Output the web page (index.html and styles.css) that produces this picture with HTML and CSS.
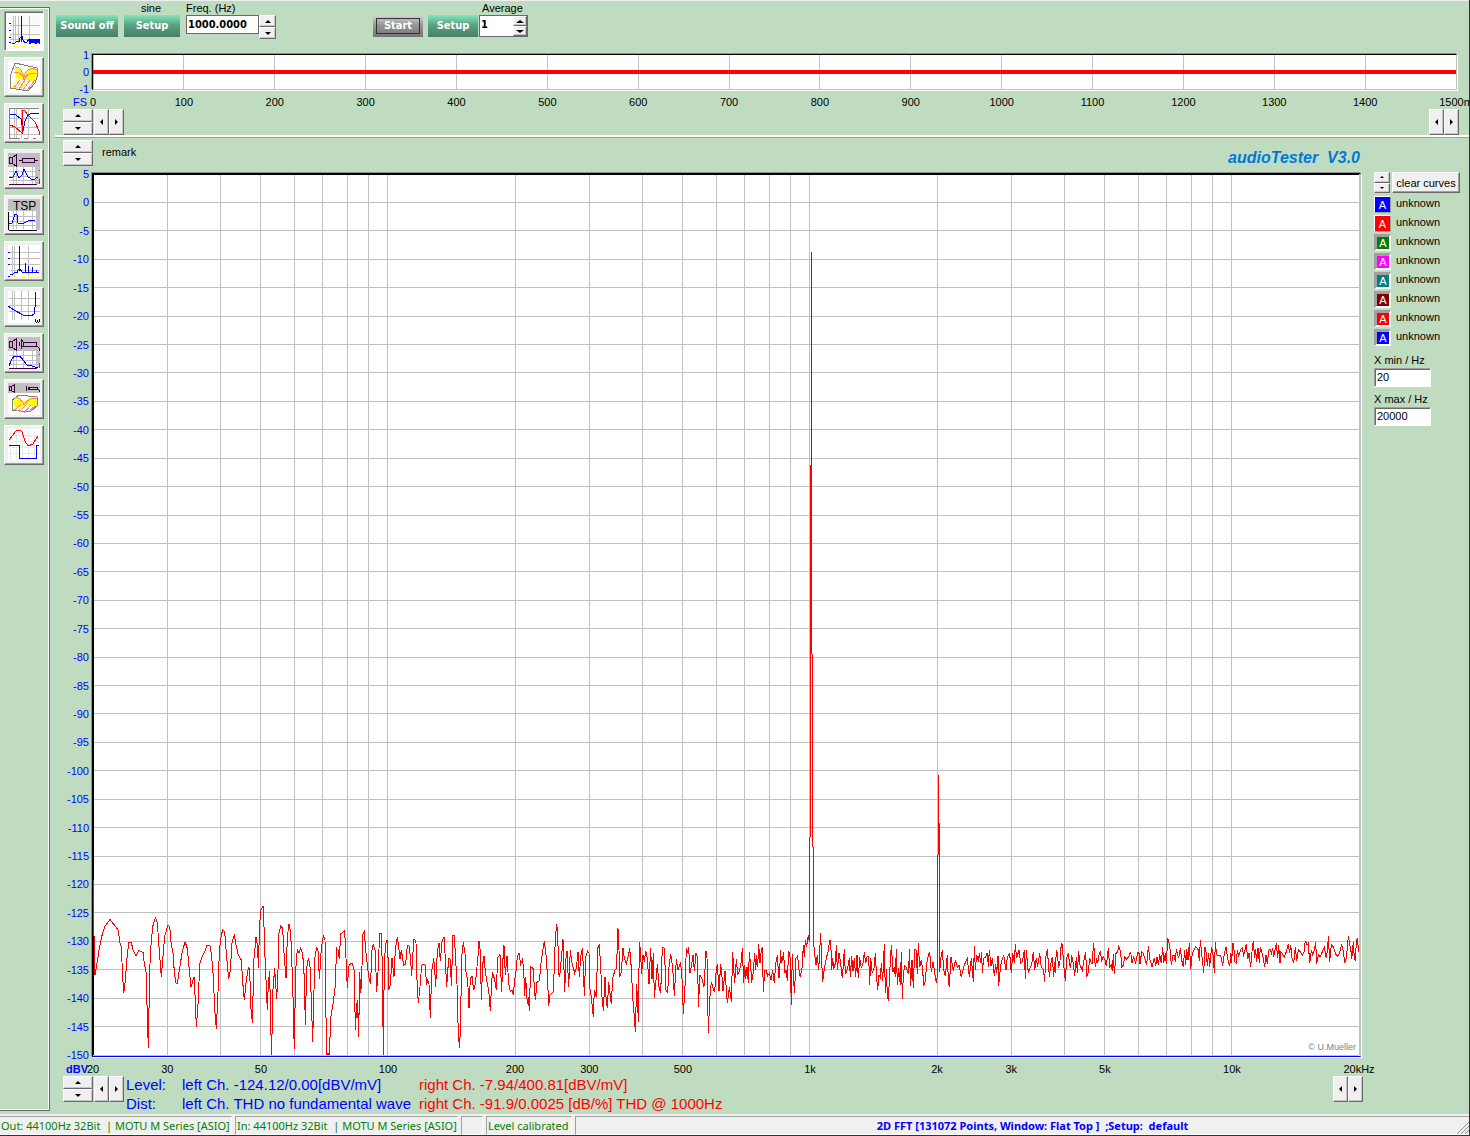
FILE: index.html
```html
<!DOCTYPE html>
<html lang="en">
<head>
<meta charset="utf-8">
<title>audioTester V3.0</title>
<link rel="stylesheet" href="styles.css">
</head>
<body>
<div class="window">
  <div class="workspace">
    <nav class="modes" aria-label="Measurement modes">
      <button class="mode mode-active" aria-label="2D FFT"><svg viewBox="0 0 32 32"><path class="g" d="M5.500 1V28M7.500 1V28M10.500 1V28M21.500 1V28M2 10.500H32M2 19.500H32M2 24.500H32"/><path class="b" d="M13.500 1V27M4 29L7 28L9 26L11 27L12 23L14 21L15 25L17 28L19 27L21 24L22 29L23 24L24 28L25 24L26 28L27 24L28 29L29 24L30 28L31 24V29M1 8.500H3M1 15.500H3M1 22.500H3M1 27.500H3"/><path class="y" d="M6 31.500H9M14 31.500H17M23 31.500H25"/></svg></button>
      <button class="mode" aria-label="3D waterfall"><svg viewBox="0 0 32 32"><path class="yf" d="M7 6L13 9L16 15L21 8L29 8L28 20L16 19L8 17Z"/><path class="gd" d="M7 2L29 7L30 13L27 22L20 30L2 27L3 13Z"/><path class="p" d="M7 6C11 5 15 11 16 16C18 9 23 5 29 9M6 12C12 10 15 15 16 19C19 12 24 11 28 13M12 19L6 27M17 19L11 28M22 19L15 29M27 19L19 29"/><path class="y" d="M9 19L4 27M14 20L8 28M19 20L13 28"/></svg></button>
      <button class="mode" aria-label="Transfer function"><svg viewBox="0 0 32 32"><path class="g" d="M6.500 1V31M8.500 1V31M13.500 1V31M20.500 1V31M1 11.500H31M1 20.500H31M1 27.500H31"/><path class="gd" d="M1.500 31.500V1.500H30.500M1 31.500H12M16 31.500H20M25 31.500H28"/><path class="b" d="M2 7L8 8L13 12L15 24L17 14L20 8L24 6H31"/><path class="r" d="M2 18L7 20L14 26V3H16L20 8L27 15L31 24V28"/></svg></button>
      <button class="mode" aria-label="Speaker impedance"><svg viewBox="0 0 32 32"><path class="gf" d="M0 0H32V31H28V14H0Z"/><path class="g" d="M5.500 14V31M8.500 14V31M15.500 14V31M24.500 14V31M27.500 14V31M1 18.500H30M1 23.500H30M1 27.500H30"/><path class="v" d="M1.500 4.500H4.500V10.500H1.500ZM4.500 4.500L8.500 1.500V13.500L4.500 10.500M11 7.500H14M14.500 5.500H26.500V9.500H14.500ZM27 7.500H30M1 31.500H29"/><path class="b" d="M1 25L5 24L8 18L11 25L14 22L16 16L20 24L25 27L30 24"/><path class="r" d="M31.500 17V18M31.500 26V31"/></svg></button>
      <button class="mode" aria-label="Thiele Small parameters"><svg viewBox="0 0 32 32"><path class="gf" d="M0 0H32V12H0ZM28 12H32V31H28Z"/><path class="g" d="M5.500 12V30M8.500 12V30M15.500 12V30M24.500 12V30M1 17.500H28M1 22.500H28M1 26.500H28"/><text x="5" y="11">TSP</text><path class="k" d="M0.500 13V31M1 31.500H29"/><path class="b" d="M1 24H4L7 15L9 16L10 24L14 25L20 22L27 21"/></svg></button>
      <button class="mode" aria-label="Distortion"><svg viewBox="0 0 32 32"><path class="g" d="M4.500 1V31M6.500 1V31M20.500 1V31M1 7.500H32M1 13.500H32M1 19.500H32M1 25.500H32"/><path class="b" d="M11.500 1V26M2 29H5L7 27L9 28L10 25L12 24L15 28L17 27V18M17 27H31M20.500 21V28M24.500 22V28M28.500 25V28M0 7.500H2M0 13.500H2M0 19.500H2M0 31.500H2"/><path class="y" d="M6 31.500H8M14 31.500H17M21 31.500H23M29 31.500H31"/></svg></button>
      <button class="mode" aria-label="Distortion over level"><svg viewBox="0 0 32 32"><path class="g" d="M4.500 0V29M6.500 0V29M13.500 0V29M20.500 0V29M1 7.500H32M1 14.500H32M1 20.500H32"/><path class="b" d="M0 15L6 19L15 24L23 25L26 23L27 16V1"/><path class="k" d="M27.500 28V30L28.500 31.500L29.500 30L30.500 31.500L31.500 30V28"/></svg></button>
      <button class="mode" aria-label="Frequency response"><svg viewBox="0 0 32 32"><path class="gf" d="M0 0H32V31H28V14H0Z"/><path class="g" d="M5.500 14V31M8.500 14V31M15.500 14V31M24.500 14V31M1 18.500H30M1 23.500H30M1 27.500H30"/><path class="v" d="M1.500 4.500H4.500V10.500H1.500ZM4.500 4.500L8.500 1.500V13.500L4.500 10.500M11.500 5V9M13.500 3V11L15 9V5ZM15.500 5.500H28.500V9.500H15.500ZM29 9L31 11V14M1 31.500H29"/><path class="b" d="M1 29L3 24L6 19H12L15 23L19 28L24 29L30 31"/><path class="r" d="M31.500 17V18M31.500 26V31"/></svg></button>
      <button class="mode" aria-label="Speaker waterfall"><svg viewBox="0 0 32 32"><path class="gf" d="M0 0H32V10H0Z"/><path class="v" d="M1.500 3.500H3.500V7.500H1.500ZM3.500 3.500L6.500 1.500V9.500L3.500 7.500M18.500 3V8M20.500 4V7M21.500 4.500H29.500V6.500H21.500ZM29 6L31 7V9"/><path class="yf" d="M7 14L16 18L24 14L30 15L28 24L16 22L7 24L5 20Z"/><path class="gd" d="M11 12L29 14L30 22L22 29L4 27V17Z"/><path class="p" d="M7 14C11 14 14 18 16 22C19 17 24 14 29 16M13 22L6 27M18 22L11 29M23 22L16 30M27 23L20 29"/><path class="y" d="M10 23L5 27M15 23L9 28"/></svg></button>
      <button class="mode" aria-label="Oscilloscope"><svg viewBox="0 0 32 32"><path class="gl" d="M2.500 1V31M8.500 1V31M14.500 1V31M20.500 1V31M26.500 1V31M1 6.500H31M1 12.500H31M1 18.500H31M1 24.500H31"/><path class="r" d="M1 11L5 6L8 2L12 1L14 3L17 12L20 17L25 15L28 10L30 7"/><path class="b" d="M1 16.500H11.500V29.500H28.500V16.500H31"/></svg></button>
    </nav>

    <main class="content">
      <header class="toolbar">
        <button class="push">Sound off</button>
        <div class="field field-sine"><span class="caption">sine</span><button class="push push-mid">Setup</button></div>
        <div class="field field-freq">
          <label class="caption" for="freq">Freq. (Hz)</label>
          <div class="joined"><input id="freq" class="entry entry-freq" value="1000.0000"><span class="spin spin-small"><button class="step up" aria-label="Frequency up"></button><button class="step down" aria-label="Frequency down"></button></span></div>
        </div>
        <button class="push push-start">Start</button>
        <button class="push push-narrow">Setup</button>
        <div class="field">
          <label class="caption caption-in" for="avg">Average</label>
          <div class="joined boxed"><input id="avg" class="entry entry-avg" value="1"><span class="spin spin-in"><button class="step up" aria-label="Average up"></button><button class="step down" aria-label="Average down"></button></span></div>
        </div>
      </header>

      <section class="timeline" aria-label="Time signal">
        <div class="frame"><svg id="time" class="chart"></svg></div>
      </section>
      <div class="controls">
        <span class="spin"><button class="step up" aria-label="Zoom in"></button><button class="step down" aria-label="Zoom out"></button></span>
        <span class="pan"><button class="step left" aria-label="Start left"></button><button class="step right" aria-label="Start right"></button></span>
        <span class="pan pan-end"><button class="step left" aria-label="End left"></button><button class="step right" aria-label="End right"></button></span>
      </div>
      <hr class="divider">

      <div class="analysis">
        <section class="spectrum" aria-label="Spectrum">
          <div class="heading">
            <span class="spin"><button class="step up" aria-label="Top level up"></button><button class="step down" aria-label="Top level down"></button></span>
            <span class="remark">remark</span>
            <h1 class="brand">audioTester&nbsp; V3.0</h1>
          </div>
          <div class="frame frame-large"><svg id="fft" class="chart"></svg></div>
          <div class="readout">
            <span class="spin"><button class="step up" aria-label="Bottom level up"></button><button class="step down" aria-label="Bottom level down"></button></span>
            <span class="pan"><button class="step left" aria-label="Minimum left"></button><button class="step right" aria-label="Minimum right"></button></span>
            <div class="values">
              <span>Level:</span><span>left Ch. -124.12/0.00[dBV/mV]</span><span class="right-ch">right Ch. -7.94/400.81[dBV/mV]</span>
              <span>Dist:</span><span>left Ch. THD no fundamental wave</span><span class="right-ch">right Ch. -91.9/0.0025 [dB/%] THD @ 1000Hz</span>
            </div>
            <span class="pan pan-end"><button class="step left" aria-label="Maximum left"></button><button class="step right" aria-label="Maximum right"></button></span>
          </div>
        </section>

        <aside class="curves">
          <div class="curve-head"><span class="spin spin-tiny"><button class="step up" aria-label="Previous curves"></button><button class="step down" aria-label="Next curves"></button></span><button class="clear">clear curves</button></div>
          <label class="curve blue"><input type="checkbox" checked>unknown</label>
          <label class="curve red"><input type="checkbox" checked>unknown</label>
          <label class="curve green"><input type="checkbox">unknown</label>
          <label class="curve magenta"><input type="checkbox">unknown</label>
          <label class="curve teal"><input type="checkbox">unknown</label>
          <label class="curve maroon"><input type="checkbox">unknown</label>
          <label class="curve red"><input type="checkbox">unknown</label>
          <label class="curve blue"><input type="checkbox">unknown</label>
          <label class="limit" for="xmin">X min / Hz</label>
          <input id="xmin" class="limit-box" value="20">
          <label class="limit" for="xmax">X max / Hz</label>
          <input id="xmax" class="limit-box" value="20000">
        </aside>
      </div>
    </main>
  </div>

  <footer class="status">
    <span class="cell cell-out">Out: 44100Hz 32Bit&nbsp; | MOTU M Series [ASIO]</span>
    <span class="cell cell-in">In: 44100Hz 32Bit&nbsp; | MOTU M Series [ASIO]</span>
    <span class="cell cell-gap"></span>
    <span class="cell cell-level">Level calibrated</span>
    <span class="cell cell-mode">2D FFT [131072 Points, Window: Flat Top ]&nbsp; ;Setup:&nbsp; default</span>
    <svg class="grip" viewBox="0 0 12 12"><path d="M0 12L12 0M4 12L12 4M8 12L12 8"/></svg>
  </footer>
</div>
<script src="charts.js"></script>
</body>
</html>
```

FILE: styles.css
```css
* { box-sizing: border-box; }
body {
  margin: 0;
  background: #3c302e;
  color: #000;
  font: 11px/14px "Liberation Sans", Arial, sans-serif;
}
button, input { font: inherit; color: inherit; margin: 0; padding: 0; border-radius: 0; }

.window {
  display: flex;
  flex-direction: column;
  min-height: 100vh;
  padding: 0 1px 1px 0;
}
.workspace {
  display: flex;
  flex: 1;
  background: #c0dcc0;
  border-top: 1px solid #f0f0f0;
}

/* mode buttons */
.modes {
  display: flex;
  flex-direction: column;
  gap: 6px;
  width: 50px;
  flex: none;
  margin: 6px 0 3px;
  padding: 3px 0 0 4px;
  border: 1px solid #696969;
  border-left: 0;
  box-shadow: inset -1px -1px #fff, inset 0 1px #fff;
}
.mode {
  display: flex;
  align-items: center;
  justify-content: center;
  width: 40px;
  height: 40px;
  flex: none;
  background: #f0f0f0;
  border: 1px solid;
  border-color: #fff #696969 #696969 #fff;
  box-shadow: inset -1px -1px #a0a0a0;
}
.mode-active {
  background: #fafafa;
  border-color: #a0a0a0 #fff #fff #a0a0a0;
  box-shadow: inset 1px 1px #696969;
}
.mode svg { width: 32px; height: 32px; background: #fff; shape-rendering: crispEdges; }
.mode-active svg { background: none; }
.mode path { fill: none; stroke-width: 1; }
.mode text { font-size: 12px; }
.mode .g { stroke: #c0c0c0; }
.mode .gl { stroke: #e8e8e8; }
.mode .gd { stroke: #808080; }
.mode .b { stroke: #00f; }
.mode .r { stroke: #f00; }
.mode .k { stroke: #000; }
.mode .v { stroke: #400040; }
.mode .y { stroke: #ff0; }
.mode .p { stroke: #ff8080; }
.mode .gf { fill: #c0c0c0; }
.mode .yf { fill: #ff0; }

.content { display: flex; flex-direction: column; flex: 1; min-width: 0; }

/* toolbar */
.toolbar { display: flex; align-items: flex-start; height: 53px; padding-left: 6px; }
.push {
  width: 62px;
  height: 22px;
  margin-top: 14px;
  border: 0;
  color: #fff;
  background: linear-gradient(#83e6bc, #5aa284 45%, #467f68);
  font: bold 11px/20px "DejaVu Sans Condensed", "DejaVu Sans", sans-serif;
}
.push-mid { width: 56px; margin-top: 0; }
.push-narrow { width: 50px; margin-left: 5px; }
.push-start {
  width: 50px;
  margin-left: 97px;
  background: linear-gradient(#d6d6d6, #969696 45%, #767676);
  outline: 1px solid #333;
  outline-offset: -4px;
}
.field { display: flex; flex-direction: column; margin-left: 1px; }
.field-sine, .field-freq { margin-left: 6px; }
.caption { height: 14px; }
.caption-in { padding-left: 3px; }
.field-sine .caption { text-align: center; padding-right: 2px; }
.joined { display: flex; align-items: flex-start; }
.entry {
  height: 19px;
  background: #fff;
  border: 1px solid #696969;
  padding: 0 0 1px 1px;
  font: bold 11px/16px "DejaVu Sans Condensed", "DejaVu Sans", sans-serif;
}
.entry-freq { width: 73px; }
.boxed { width: 49px; height: 22px; background: #fff; border: 1px solid #696969; }
.entry-avg { width: 33px; height: 18px; border: 0; }

/* spin and pan buttons */
.spin { display: flex; flex-direction: column; width: 30px; height: 26px; flex: none; }
.spin-small { width: 17px; height: 24px; }
.spin-in { width: 14px; height: 20px; }
.spin-tiny { width: 16px; height: 21px; }
.pan { display: flex; width: 30px; height: 26px; flex: none; margin-left: 1px; }
.pan-end { margin-left: auto; }
.step {
  display: flex;
  align-items: center;
  justify-content: center;
  flex: 1;
  min-height: 0;
  background: #f0f0f0;
  border: 1px solid;
  border-color: #fff #696969 #696969 #fff;
  box-shadow: inset -1px -1px #c8c8c8;
}
.step::before { content: ""; border: 3px solid transparent; }
.up::before { border-top: 0; border-bottom-color: #000; }
.down::before { border-bottom: 0; border-top-color: #000; }
.left::before { border-left: 0; border-right-color: #000; }
.right::before { border-right: 0; border-left-color: #000; }
.spin-tiny .step::before { border-left-width: 2px; border-right-width: 2px; }
.spin-tiny .up::before { border-bottom-width: 2px; }
.spin-tiny .down::before { border-top-width: 2px; }
.spin-in .step::before { border-left-width: 4px; border-right-width: 4px; }

/* charts */
.timeline { padding: 0 12px 19px 42px; }
.frame {
  display: flex;
  height: 36px;
  background: #fff;
  border: 1px solid #000;
  border-right-color: #c0c0c0;
  border-bottom-color: #c0c0c0;
  box-shadow: 1px 1px #fff, -1px -1px #909090;
}
.frame-large {
  flex: 1;
  min-height: 400px;
  padding: 0 1px 1px 0;
  border-bottom-color: #00f;
}
.chart { width: 100%; height: auto; overflow: visible; font-size: 11px; }
.chart line, .chart polyline { shape-rendering: crispEdges; }
.grid { stroke: #c0c0c0; }
.edge { stroke: #000; stroke-width: 2; }
.trace { fill: none; stroke: #f00; }
.signal { stroke: #f00; stroke-width: 4; }
.peak { stroke: #404040; }
.x-label { text-anchor: middle; }
.y-label { text-anchor: end; fill: #00f; }
.unit { text-anchor: end; fill: #00f; }
.unit-bold { font-weight: bold; }
.credit { text-anchor: end; fill: #808080; font-size: 9px; }
.controls { display: flex; padding: 0 10px 0 13px; }
.divider {
  width: auto;
  height: 3px;
  margin: 0 0 0 5px;
  border: solid #a0a0a0;
  border-width: 0 0 1px;
  background: #fff;
}

.analysis { display: flex; flex: 1; }
.spectrum { display: flex; flex-direction: column; flex: 1; min-width: 0; padding: 2px 0 0 42px; }
.heading { display: flex; height: 33px; margin-left: -29px; }
.remark { padding: 5px 0 0 9px; }
.brand {
  margin: 8px 1px 0 auto;
  color: #0078d7;
  font: italic bold 16px/20px "Liberation Sans", Arial, sans-serif;
}
.readout { display: flex; margin: 19px -2px 0 -29px; height: 38px; }
.values {
  display: grid;
  grid-template-columns: 56px 237px auto;
  grid-auto-rows: 19px;
  margin-left: 2px;
  color: #00f;
  font-size: 15px;
  line-height: 18px;
  white-space: nowrap;
}
.right-ch { color: #f00; }

/* curve list */
.curves { display: flex; flex-direction: column; align-items: flex-start; width: 108px; flex: none; padding: 34px 0 0 13px; }
.curve-head { display: flex; gap: 2px; height: 24px; }
.clear {
  width: 68px;
  height: 21px;
  background: #f0f0f0;
  border: 1px solid;
  border-color: #fff #696969 #696969 #fff;
  box-shadow: inset -1px -1px #a0a0a0;
}
.curve { display: flex; gap: 5px; height: 19px; }
.curve input {
  appearance: none;
  display: flex;
  align-items: center;
  justify-content: center;
  width: 17px;
  height: 17px;
  border: solid;
  border-width: 3px 2px 2px 3px;
  border-color: #a0a0a0 #fff #fff #a0a0a0;
  color: #fff;
}
.curve input::before { content: "A"; font-size: 11px; line-height: 12px; }
.curve input:checked { border-width: 1px; border-color: #fff #a0a0a0 #a0a0a0 #fff; }
.blue input { background: #00f; }
.red input { background: #f00; }
.green input { background: #008000; }
.magenta input { background: #f0f; }
.teal input { background: #008080; }
.maroon input { background: #800000; }
.limit { height: 15px; margin-top: 5px; }
.limit-box {
  width: 57px;
  height: 19px;
  padding: 0 0 2px 2px;
  background: #fff;
  border: 1px solid;
  border-color: #a0a0a0 #fff #fff #a0a0a0;
  box-shadow: inset 1px 1px #696969;
}

/* status bar */
.status {
  display: flex;
  gap: 3px;
  height: 21px;
  padding-top: 2px;
  background: #f0f0f0;
  color: #008000;
  font: 11px/18px "Noto Sans", sans-serif;
  white-space: nowrap;
}
.cell {
  border: 1px solid;
  border-color: #a0a0a0 #fff #fff #a0a0a0;
  flex: none;
  padding-left: 1px;
}
.cell-out { width: 232px; border-left: 0; }
.cell-in { width: 223px; }
.cell-gap { width: 22px; }
.cell-level { width: 86px; }
.cell-mode { flex: 1; padding-left: 20px; text-align: center; color: #00f; font-weight: bold; border-right: 0; }
.grip { width: 12px; height: 12px; margin: 6px 0 0 -15px; stroke: #909090; fill: none; }
```

FILE: charts.js
```js
const NS = 'http://www.w3.org/2000/svg';

function add(parent, tag, attrs, text) {
  const el = document.createElementNS(NS, tag);
  for (const key in attrs) el.setAttribute(key, attrs[key]);
  if (text !== undefined) el.textContent = text;
  parent.appendChild(el);
  return el;
}
const pct = v => v * 100 + '%';
const vline = (svg, f, cls) => add(svg, 'line', { x1: pct(f), x2: pct(f), y1: 0, y2: '100%', class: cls });
const hline = (svg, f, cls) => add(svg, 'line', { x1: 0, x2: '100%', y1: pct(f), y2: pct(f), class: cls });

/* time signal */
const time = document.getElementById('time');
for (let t = 0; t <= 1500; t += 100) {
  vline(time, t / 1500, 'grid');
  add(time, 'text', { x: pct(t / 1500), y: '100%', dy: 17, class: 'x-label' }, t === 1500 ? '1500m' : t);
}
add(time, 'line', { x1: 0, x2: '100%', y1: '50%', y2: '50%', class: 'signal' });
[1, 0, -1].forEach((v, i) => add(time, 'text', { x: -4, y: pct(i / 2), dy: 4, class: 'y-label' }, v));
add(time, 'text', { x: -6, y: '100%', dy: 17, class: 'unit' }, 'FS');

/* spectrum */
const fft = document.getElementById('fft');
const fx = f => Math.log10(f / 20) / 3;
const fy = db => (5 - db) / 155;
for (let decade = 10; decade <= 10000; decade *= 10) {
  for (let n = 1; n < 10; n++) {
    const f = decade * n;
    if (f > 20 && f < 20000) vline(fft, fx(f), 'grid');
  }
}
vline(fft, 1, 'grid');
for (let db = 5; db >= -150; db -= 5) {
  if (db < 5) hline(fft, fy(db), 'grid');
  add(fft, 'text', { x: -4, y: pct(fy(db)), dy: 4, class: 'y-label' }, db);
}
vline(fft, 0, 'edge');
hline(fft, 0, 'edge');
const marks = { 20: '20', 30: '30', 50: '50', 100: '100', 200: '200', 300: '300', 500: '500',
  1000: '1k', 2000: '2k', 3000: '3k', 5000: '5k', 10000: '10k', 20000: '20kHz' };
for (const f in marks) add(fft, 'text', { x: pct(fx(f)), y: '100%', dy: 18, class: 'x-label' }, marks[f]);
add(fft, 'text', { x: -5, y: '100%', dy: 18, class: 'unit unit-bold' }, 'dBV');
add(fft, 'text', { x: '100%', y: '100%', dx: -3, dy: -5, class: 'credit' }, '© U.Mueller');

/* measured curve: sections with an x origin, samples in steps of a third of a unit */
const sections = [
  [-8, '25,-30 25,115 28,150 30,255 37,215 42,180 50,140 60,108 75,89 88,105 100,121 104,155 109,170 112,240 116,310 121,270 125,215 131,158 139,157 144,180 153,199 161,181 174,187 178,220 184,250 186,345 190,475 194,240 198,165 203,110 211,83 217,98 222,170 229,262 233,210 239,140 248,106 254,110 259,165 265,195 268,250 273,280 277,280 283,240 291,190 300,155 307,175 312,230 318,292 327,260 330,315 334,410 340,330 344,222 350,203 357,190 366,166 375,168 380,200 385,260 389,355 394,418 399,305 403,185 407,145 413,119 419,125 424,190 431,268 436,240 441,160 448,133 453,165 460,195 469,210 473,275 478,330 484,270 490,233 494,235 497,345 502,398 507,205 513,142 518,170 520,235 524,100 528,60 534,48 537,110 540,200 543,270 547,360 550,280 554,243 557,400 560,498 563,310 569,235 575,328 579,240 582,130 587,109 593,115 597,190 603,265 607,140 612,102 617,125 621,230 624,320 626,410 628,478 632,240 637,178 642,190 647,175 653,190 658,265 661,405 665,235 670,203 675,230 679,330 683,455 687,300 690,200 695,170 700,185 703,268 709,175 715,137 720,150 722,325 725,498 729,490 733,498 737,385 743,350 750,295 755,175 759,180 763,208 767,132 773,127 779,122 783,205 787,295 791,230 798,219 803,222 808,245 811,420 814,340 816,385 818,330 821,440 824,245 827,310 830,275 833,135 838,125 842,180 848,235 853,270 857,283 860,185 865,162 871,185 875,305 879,245 884,130 889,130 892,230 895,495 898,210 904,151 908,150 911,300 916,285 921,205 927,260 931,180 937,140 942,180 945,207 949,180 956,226 962,222 967,168 972,167 976,200 980,257 986,150'],
  [317, '14,148 18,160 21,270 25,340 30,290 35,225 45,224 50,285 53,268 57,283 61,385 65,245 71,205 74,235 77,290 82,185 87,160 91,212 96,155 102,140 105,190 110,290 116,205 121,208 124,287 129,137 133,136 137,210 141,282 145,435 149,475 152,380 155,200 160,157 165,190 168,245 173,270 177,355 181,265 186,258 191,301 196,280 200,240 204,200 207,153 211,185 214,330 218,225 222,197 226,245 231,275 236,300 241,364 245,275 248,247 254,270 259,300 263,203 270,193 275,305 278,220 282,166 286,255 291,197 296,280 301,305 306,300 310,314 314,270 317,255 322,200 327,190 332,222 337,210 341,235 344,318 347,262 352,343 355,320 358,363 362,230 369,235 373,290 376,330 381,277 388,273 393,220 398,185 403,153 408,195 412,250 416,347 420,316 430,305 434,200 436,145 440,103 443,125 446,250 449,262 454,205 459,148 462,240 464,307 468,205 471,182 476,290 481,180 485,215 491,237 494,250 499,235 504,185 508,260 512,200 517,175 520,230 523,318 527,200 533,184 537,190 539,290 544,320 550,380 553,300 559,320 563,175 568,163 572,230 576,320 580,362 585,260 588,320 592,355 596,275 604,343 608,265 615,240 620,235 622,150 624,115 627,180 629,262 634,245 639,175 643,205 649,222 654,200 659,175 664,235 668,320 672,370 676,425 680,282 683,340 685,397 688,155 691,180 695,252 699,195 703,215 707,182 712,205 717,283 722,175 726,268 730,190 733,323 738,270 742,223 747,290 752,310 757,172 763,175 768,300 773,308 777,230 782,193 788,230 793,317 799,207 804,240 811,220 815,240 820,372 825,290 829,175 833,188 836,172 840,250 845,225 849,195 853,243 858,190 863,205 865,352 870,255 876,268 882,290 888,183 891,205 895,430 899,330 904,275 908,290 914,307 918,250 922,223 927,303 932,222 936,260 939,302 945,243 952,340 958,292 964,335 968,187 974,280 979,208 983,255'],
  [642, '14,240 19,215 22,175 26,278 29,225 32,268 36,232 40,278 43,185 47,225 50,278 55,245 59,190 62,240 65,195 68,230 71,162 75,220 79,180 82,170 85,305 89,240 93,240 98,257 103,250 108,270 113,240 118,280 122,220 127,195 131,262 134,263 136,180 140,218 146,187 149,250 153,240 157,272 161,183 165,200 169,345 172,192 175,265 179,310 182,205 188,198 193,250 196,260 201,235 205,165 208,200 211,150 215,170 220,135 223,155 224,0 226,-300 227,-1275 229,-1275 230,-1035 232,-400 235,0 236,160 239,192 243,225 247,195 251,240 257,130 260,210 263,275 268,235 274,205 279,185 284,150 287,150 290,240 293,205 296,238 301,220 304,165 307,240 312,190 316,212 322,265 328,178 331,250 335,245 340,225 343,205 346,262 350,198 354,242 358,205 362,260 366,195 370,265 374,202 379,235 385,215 388,187 392,220 397,198 401,198 404,285 407,205 412,250 417,235 421,190 425,262 428,300 432,255 436,262 439,220 443,272 448,163 451,310 454,238 457,315 460,332 463,270 466,212 469,165 474,245 478,230 481,260 484,178 487,285 491,235 496,285 499,185 502,328 505,255 509,228 513,230 518,248 521,250 523,177 527,288 531,210 535,293 539,178 543,180 547,252 550,160 554,232 559,210 563,240 566,287 571,272 575,220 580,195 584,185 589,245 594,215 598,240 604,280 607,258 608,0 610,-200 610,-345 611,-345 612,-200 613,0 614,245 618,200 622,180 626,240 631,258 637,195 640,270 643,290 648,200 655,243 661,210 667,232 672,225 679,262 685,235 692,215 697,205 703,262 709,205 712,240 715,275 718,168 721,240 725,195 730,215 733,190 737,218 740,185 742,248 746,205 752,202 757,188 760,230 763,180 768,228 772,205 778,258 782,222 785,250 789,197 791,288 796,235 800,212 806,195 813,240 817,200 824,190 829,250 833,190 838,218 841,163 845,205 852,180 857,220 862,215 868,180 871,268 874,180 880,250 884,235 890,225 895,185 899,240 904,205 908,230 914,190 919,233 925,237 929,275 932,205 937,178 943,260 949,210 952,200 956,262'],
  [957, '14,215 16,248 19,180 22,190 26,235 30,212 34,160 37,165 41,225 46,272 50,205 55,188 59,225 62,233 65,195 69,215 74,257 79,202 82,250 86,183 90,225 97,242 102,210 107,185 110,260 115,245 119,205 126,222 131,158 136,232 140,205 143,218 147,195 151,183 155,212 160,200 165,210 169,228 175,175 179,230 184,225 187,243 190,193 193,253 198,190 203,185 206,170 212,185 215,232 220,225 224,200 230,208 236,200 242,185 246,218 251,202 257,218 263,187 267,190 270,222 275,185 280,190 285,208 290,225 295,168 299,205 306,230 313,203 317,228 321,200 325,225 329,193 334,220 338,170 341,218 346,190 349,222 353,143 359,165 364,225 369,195 373,195 376,215 379,178 386,205 391,175 395,210 400,232 404,180 407,225 410,177 414,210 418,158 422,238 427,190 431,183 437,170 444,178 448,212 451,150 455,190 461,248 465,172 469,190 472,228 476,188 479,230 485,170 489,195 493,248 496,155 500,195 506,198 512,195 518,228 523,190 528,170 533,205 539,228 543,190 545,220 548,160 551,160 554,215 559,220 562,180 566,200 572,178 578,172 580,200 584,185 589,162 593,208 597,190 602,232 606,185 610,152 614,205 617,178 620,215 624,175 628,218 631,172 636,188 639,200 644,232 648,195 652,222 656,180 661,178 664,190 668,175 671,200 675,180 679,160 683,205 686,165 690,220 693,185 697,190 703,202 709,185 715,163 719,190 722,165 726,205 731,218 736,172 740,213 745,180 751,185 757,195 762,188 766,152 771,165 775,160 779,220 784,180 788,195 793,180 797,155 800,222 805,195 811,200 817,185 823,172 829,205 833,175 835,137 839,215 844,165 850,170 856,190 862,200 868,190 875,165 880,185 884,218 889,205 892,175 895,137 899,165 902,172 905,208 910,155 913,205 916,213 919,155 922,145 926,185']
];
const points = sections.flatMap(([origin, data]) => data.split(' ').map(pair => {
  const [x, y] = pair.split(',').map(Number);
  return (origin + x / 3).toFixed(2) + ',' + (716 + y / 3).toFixed(2);
}));
const plot = add(fft, 'svg', { width: '100%', height: '100%', viewBox: '0 0 1266 881', preserveAspectRatio: 'none' });
add(plot, 'line', { x1: 718, x2: 718, y1: 78, y2: 291, class: 'peak', 'vector-effect': 'non-scaling-stroke' });
add(plot, 'polyline', { points: points.join(' '), class: 'trace', 'vector-effect': 'non-scaling-stroke' });
```
